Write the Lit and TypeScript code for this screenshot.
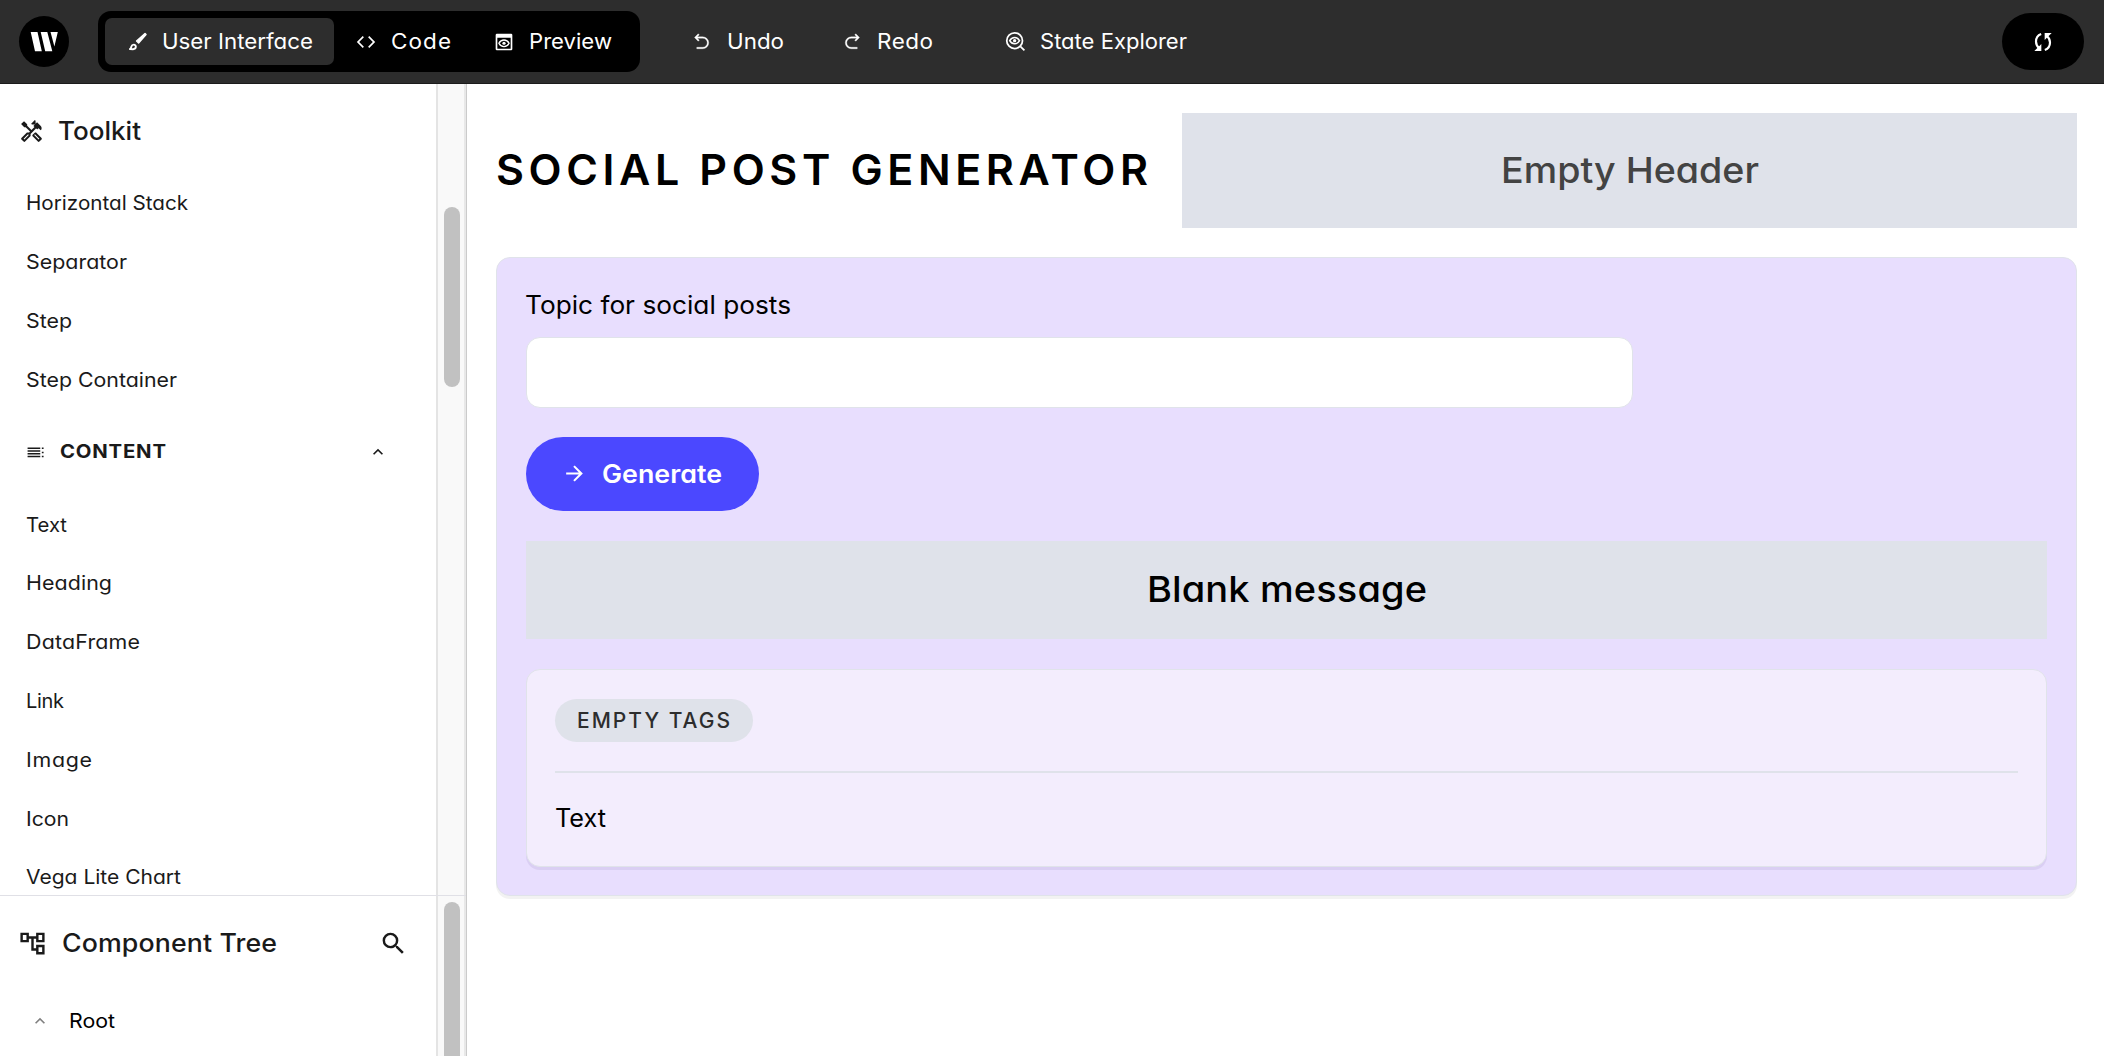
import { LitElement, html, css, svg } from "lit";
import { customElement, property, state } from "lit/decorators.js";

/* Icon shapes, all on a 24 x 24 grid. */
const ICONS: Record<string, unknown> = {
  brush: svg`<path d="M21.500 1.800 22.800 3.100 13.400 14 10.800 11.400Z" stroke="currentColor" stroke-width="1.800" stroke-linejoin="round"/><path d="M2.400 21.600c1.400-.7 1.500-1.800 1.900-3.200.4-1.500 1.500-2.400 3-2.400 1.600 0 2.700 1.200 2.600 2.700-.1 1.900-1.500 3-3.500 3-1.400 0-2.800 0-4-.1Z" fill="none" stroke="currentColor" stroke-width="2.400" stroke-linejoin="round"/>`,
  code: svg`<path d="M23 12 15.929 19.071 14.515 17.657 20.172 12 14.515 6.343 15.929 4.929 23 12ZM3.828 12 9.485 17.657 8.071 19.071 1 12 8.071 4.929 9.485 6.343 3.828 12Z"/>`,
  preview: svg`<path fill-rule="evenodd" d="M3.500 2h17A1.500 1.500 0 0 1 22 3.500v17a1.500 1.500 0 0 1-1.500 1.500h-17A1.500 1.500 0 0 1 2 20.500v-17A1.500 1.500 0 0 1 3.500 2ZM4 7v13h16V7Z"/><path fill="none" stroke="currentColor" stroke-width="1.700" d="M5.900 13.500C7.200 10.900 9.300 9.500 12 9.500s4.800 1.400 6.100 4c-1.300 2.600-3.400 4-6.100 4s-4.800-1.400-6.100-4Z"/><circle cx="12" cy="13.500" r="1.900"/>`,
  undo: svg`<path stroke="currentColor" stroke-width=".4" d="M5.828 7 8.364 9.535 6.950 10.949 2 6 6.950 1.050 8.364 2.464 5.828 5H13a8 8 0 1 1 0 16H5v-2h8a6 6 0 0 0 0-12H5.828Z"/>`,
  redo: svg`<path stroke="currentColor" stroke-width=".4" d="M18.172 7H11a6 6 0 0 0 0 12h8v2h-8a8 8 0 1 1 0-16h7.172l-2.536-2.536L17.050 1.050 22 6l-4.950 4.949-1.414-1.414L18.172 7Z"/>`,
  explorer: svg`<g fill="none" stroke="currentColor" stroke-width="2"><circle cx="11" cy="11" r="9"/><path d="m17.500 17.500 4.700 4.700"/><path stroke-width="1.800" d="M5.400 11c1.300-2.400 3.100-3.600 5.600-3.600s4.300 1.200 5.600 3.600c-1.300 2.400-3.100 3.600-5.600 3.600S6.700 13.400 5.400 11Z"/></g><circle cx="11" cy="11" r="1.900"/>`,
  refresh: svg`<g fill="none" stroke="currentColor" stroke-width="2.600"><path d="M9.800 2.300C6.300 3.600 3.600 7 3.600 11.400c0 3.500 1.500 6.200 4.200 8.300"/><path d="M14.200 21.700c3.500-1.300 6.200-4.700 6.200-9.100 0-3.500-1.500-6.200-4.200-8.300"/></g><path d="M1.600 22.800H10v-8.400l-2.600 2.700-3.700 3.600ZM22.400 1.200H14v8.400l2.600-2.700 3.700-3.600Z"/>`,
  toolkit: svg`<path fill-rule="evenodd" d="M21.670 18.170l-5.300-5.300h-.99l-2.540 2.540v.99l5.300 5.300c.39.39 1.020.39 1.410 0l2.120-2.120c.39-.38.39-1.020 0-1.410ZM18.840 19.590l-4.240-4.240.71-.71 4.240 4.240-.71.71Z"/><path fill-rule="evenodd" d="M17.340 10.190l1.410-1.410 2.120 2.120c1.170-1.170 1.170-3.070 0-4.240l-3.540-3.540-1.410 1.410V1.710L15.220 1l-3.540 3.540.71.71h2.830l-1.410 1.410 1.060 1.060-2.890 2.890L7.850 6.480V5.060L4.830 2.040 2 4.870 5.030 7.900h1.410l4.130 4.130-.85.85H7.600l-5.300 5.300c-.39.39-.39 1.020 0 1.410l2.120 2.120c.39.39 1.020.39 1.410 0l5.300-5.300v-2.120l5.150-5.150 1.060.35ZM9.380 15.340l-4.240 4.240-.71-.71 4.240-4.240.71.71Z"/>`,
  content: svg`<path d="M2 5.800h16v1.900H2zM2 9.200h16v1.900H2zM2 12.600h16v1.900H2zM2 16h16v1.900H2zM20 5.800h2.200v1.900H20zM20 10.900h2.200v1.900H20zM20 16h2.200v1.900H20z"/>`,
  up: svg`<path d="M12 10.830 7.400 15.400 6 14l6-6 6 6-1.400 1.400Z"/>`,
  tree: svg`<path fill-rule="evenodd" d="M22 11V3h-7v3H9V3H2v8h7V8h2v10h4v3h7v-8h-7v3h-2V8h2v3ZM7 9H4V5h3ZM17 15h3v4h-3ZM17 5h3v4h-3Z"/>`,
  search: svg`<path fill-rule="evenodd" d="M15.500 14h-.79l-.28-.27A6.470 6.470 0 0 0 16 9.500 6.500 6.500 0 1 0 9.500 16c1.610 0 3.090-.59 4.230-1.570l.27.28v.79l5 4.990L20.490 19l-4.990-5Zm-6 0a4.500 4.500 0 1 1 0-9 4.500 4.500 0 0 1 0 9Z"/>`,
  arrow: svg`<path d="m16.172 11-5.364-5.364 1.414-1.414L20 12l-7.778 7.778-1.414-1.414L16.172 13H4v-2z"/>`,
};

@customElement("ui-icon")
class UiIcon extends LitElement {
  static styles = css`
    :host { display: inline-flex; flex: none; }
    svg { display: block; fill: currentColor; overflow: visible; }
  `;
  @property() name = "";
  @property({ type: Number }) size = 20;
  render() {
    return html`<svg width=${this.size} height=${this.size} viewBox="0 0 24 24" aria-hidden="true">${ICONS[this.name]}</svg>`;
  }
}

/* A single-line label fitted to a given width: letters widen slightly first, tracking takes the rest. */
@customElement("ui-label")
class UiLabel extends LitElement {
  static styles = css`
    :host { display: inline-block; flex: none; white-space: nowrap; }
    .box { display: block; }
    .text { display: inline-block; white-space: nowrap; transform-origin: 0 50%; }
  `;
  @property() text = "";
  @property({ type: Number }) width = 0;
  @property({ type: Number }) stretch = 1.07;
  @state() private tracking = 0;
  @state() private scale = 1;
  firstUpdated() {
    const span = this.renderRoot.querySelector(".text") as HTMLElement;
    const natural = span.getBoundingClientRect().width;
    this.scale = Math.max(1, Math.min(this.stretch, this.width / natural));
    this.tracking = (this.width / this.scale - natural) / Math.max(1, this.text.length - 1);
  }
  render() {
    return html`<span class="box" style="width:${this.width}px"><span class="text" style="letter-spacing:${this.tracking}px;transform:scaleX(${this.scale})">${this.text}</span></span>`;
  }
}

interface Item { label: string; width: number; }

const LAYOUT_ITEMS: Item[] = [
  { label: "Horizontal Stack", width: 162 },
  { label: "Separator", width: 101 },
  { label: "Step", width: 46 },
  { label: "Step Container", width: 151 },
];
const CONTENT_ITEMS: Item[] = [
  { label: "Text", width: 41 },
  { label: "Heading", width: 86 },
  { label: "DataFrame", width: 114 },
  { label: "Link", width: 38 },
  { label: "Image", width: 66 },
  { label: "Icon", width: 43 },
  { label: "Vega Lite Chart", width: 155 },
];

@customElement("app-header")
class AppHeader extends LitElement {
  static styles = css`
    :host { display: block; }
    .bar { box-sizing: border-box; height: 84px; display: flex; align-items: center; padding: 0 20px 0 19px; background: #2d2d2d; border-bottom: 1px solid #1b1b1b; color: #fff; font-size: 21px; line-height: 30px; }
    .logo { width: 50px; height: 51px; border-radius: 50%; background: #000; display: flex; align-items: center; justify-content: center; }
    .logo svg { display: block; fill: #fff; }
    .switch { display: flex; align-items: center; box-sizing: border-box; height: 61px; margin-left: 29px; padding: 0 7px; background: #000; border-radius: 13px; }
    .action { display: flex; align-items: center; gap: 13px; }
    .tab { padding: 0 21px 0 20px; height: 47px; border-radius: 7px; }
    .active { background: #2d2d2d; }
    .slot { width: 24px; display: flex; justify-content: center; }
    .undo { margin-left: 50px; }
    .redo { margin-left: 56px; }
    .state { margin-left: 70px; }
    .refresh { margin-left: auto; width: 82px; height: 57px; border-radius: 29px; background: #000; display: flex; align-items: center; justify-content: center; }
  `;
  private action(cls: string, icon: string, size: number, text: string, width: number) {
    return html`<div class="action ${cls}"><span class="slot"><ui-icon name=${icon} .size=${size}></ui-icon></span><ui-label .text=${text} .width=${width}></ui-label></div>`;
  }
  render() {
    return html`<div class="bar">
      <div class="logo">
        <svg width="28" height="21" viewBox="0 0 28 21"><path d="M.7 1h6.800l4.300 19.300H5ZM10.700 1h6.600l5 19.300h-7.100ZM20.500 1h7.300l-3.400 14.600Z"/></svg>
      </div>
      <div class="switch">
        ${this.action("tab active", "brush", 19, "User Interface", 151)}
        ${this.action("tab", "code", 20, "Code", 60)}
        ${this.action("tab", "preview", 20, "Preview", 83)}
      </div>
      ${this.action("undo", "undo", 18, "Undo", 57)}
      ${this.action("redo", "redo", 18, "Redo", 56)}
      ${this.action("state", "explorer", 21, "State Explorer", 147)}
      <div class="refresh"><ui-icon name="refresh" .size=${20}></ui-icon></div>
    </div>`;
  }
}

@customElement("app-sidebar")
class AppSidebar extends LitElement {
  static styles = css`
    :host { display: flex; flex-direction: column; box-sizing: border-box; width: 467px; height: 972px; border-right: 1px solid #cbcbcb; color: #1a1a1a; }
    .panel { display: flex; overflow: hidden; flex: none; }
    .toolkit { height: 811px; }
    .tree { height: 160px; border-top: 1px solid #e0e0e6; }
    .body { flex: 1; min-width: 0; }
    .track { box-sizing: border-box; width: 30px; flex: none; background: #f9f9f9; border-left: 2px solid #e4e4e4; border-right: 2px solid #e8e8e8; padding-left: 6px; }
    .thumb { width: 16px; border-radius: 8px; background: #c1c1c1; }
    .thumb-toolkit { height: 180px; margin-top: 123px; }
    .thumb-tree { height: 200px; margin-top: 6px; }
    .title { display: flex; align-items: center; box-sizing: border-box; font-size: 25px; font-weight: 500; line-height: 36px; }
    .toolkit-title { height: 90px; padding: 4px 0 0 19px; gap: 14px; }
    .tree-title { height: 94px; padding: 0 28px 0 18px; gap: 15px; }
    .item { height: 58.800px; padding-left: 26px; display: flex; align-items: center; font-size: 20px; line-height: 28px; }
    .section { height: 86px; padding: 0 48px 0 26px; display: flex; align-items: center; gap: 15px; font-size: 19px; font-weight: 700; line-height: 28px; }
    .push { margin-left: auto; }
    .root { height: 61px; padding-left: 30px; display: flex; align-items: center; gap: 19px; font-size: 20px; line-height: 28px; color: #000; }
    .muted { color: #808080; }
  `;
  private item(i: Item) {
    return html`<div class="item"><ui-label .text=${i.label} .width=${i.width}></ui-label></div>`;
  }
  render() {
    return html`
      <div class="panel toolkit">
        <div class="body">
          <div class="title toolkit-title"><ui-icon name="toolkit" .size=${25}></ui-icon><ui-label .text=${"Toolkit"} .width=${83}></ui-label></div>
          ${LAYOUT_ITEMS.map((i) => this.item(i))}
          <div class="section"><ui-icon name="content" .size=${19}></ui-icon><ui-label .text=${"CONTENT"} .width=${106}></ui-label><ui-icon class="push" name="up" .size=${20}></ui-icon></div>
          ${CONTENT_ITEMS.map((i) => this.item(i))}
        </div>
        <div class="track"><div class="thumb thumb-toolkit"></div></div>
      </div>
      <div class="panel tree">
        <div class="body">
          <div class="title tree-title"><ui-icon name="tree" .size=${29}></ui-icon><ui-label .text=${"Component Tree"} .width=${215}></ui-label><ui-icon class="push" name="search" .size=${29}></ui-icon></div>
          <div class="root"><ui-icon class="muted" name="up" .size=${20}></ui-icon><ui-label .text=${"Root"} .width=${46}></ui-label></div>
        </div>
        <div class="track"><div class="thumb thumb-tree"></div></div>
      </div>`;
  }
}

@customElement("app-canvas")
class AppCanvas extends LitElement {
  static styles = css`
    :host { display: flex; flex-direction: column; flex: 1; min-width: 0; box-sizing: border-box; padding: 29px 27px 0 29px; color: #000; }
    .head { display: flex; align-items: center; height: 115px; }
    .title { box-sizing: border-box; font-size: 43px; font-weight: 600; line-height: 60px; width: 686px; padding-bottom: 3px; }
    .slot { flex: 1; height: 115px; display: flex; align-items: center; justify-content: center; background: #dfe2ea; color: #434343; font-size: 35.500px; font-weight: 500; line-height: 50px; }
    .card { box-sizing: border-box; height: 639px; margin-top: 29px; padding: 28px 29px; display: flex; flex-direction: column; align-items: stretch; background: #e8defe; border: 1px solid #e0e3ea; border-radius: 14px; box-shadow: 0 3px 0 rgba(0, 0, 0, 0.05); }
    .field { font-size: 25px; line-height: 38px; margin-left: -1px; }
    .input { box-sizing: border-box; width: 1107px; height: 71px; margin-top: 13px; border: 1px solid #e0e3ea; border-radius: 14px; background: #fff; }
    .button { align-self: flex-start; box-sizing: border-box; width: 233px; height: 74px; margin-top: 29px; border-radius: 37px; background: #4b48ff; color: #fff; display: flex; align-items: center; padding-left: 36px; gap: 15px; font-size: 25px; font-weight: 600; line-height: 36px; }
    .message { height: 99px; margin-top: 30px; background: #dfe2ea; display: flex; align-items: center; justify-content: center; font-size: 35.500px; font-weight: 500; line-height: 50px; }
    .result { box-sizing: border-box; height: 198px; margin-top: 30px; padding: 29px 28px 0; background: #f3edfd; border: 1px solid #e0e3ea; border-radius: 14px; box-shadow: 0 3px 0 rgba(60, 40, 120, 0.08); display: flex; flex-direction: column; align-items: flex-start; }
    .tag { box-sizing: border-box; width: 198px; height: 43px; padding-left: 22px; border-radius: 22px; background: #dfe2ea; color: #2d2d2d; display: flex; align-items: center; font-size: 21px; font-weight: 500; line-height: 30px; }
    .rule { align-self: stretch; height: 2px; margin: 29px 0 27px; background: #dfe2ea; }
    .text { font-size: 25px; line-height: 36px; }
  `;
  render() {
    return html`
      <div class="head">
        <div class="title"><ui-label .text=${"SOCIAL POST GENERATOR"} .width=${652} .stretch=${1}></ui-label></div>
        <div class="slot"><ui-label .text=${"Empty Header"} .width=${258}></ui-label></div>
      </div>
      <div class="card">
        <div class="field"><ui-label .text=${"Topic for social posts"} .width=${266}></ui-label></div>
        <div class="input"></div>
        <div class="button"><ui-icon name="arrow" .size=${25}></ui-icon><ui-label .text=${"Generate"} .width=${120}></ui-label></div>
        <div class="message"><ui-label .text=${"Blank message"} .width=${280}></ui-label></div>
        <div class="result">
          <div class="tag"><ui-label .text=${"EMPTY TAGS"} .width=${153} .stretch=${1}></ui-label></div>
          <div class="rule"></div>
          <div class="text"><ui-label .text=${"Text"} .width=${51}></ui-label></div>
        </div>
      </div>`;
  }
}

@customElement("app-root")
class AppRoot extends LitElement {
  static styles = css`
    :host { display: block; width: 2104px; height: 1056px; overflow: hidden; background: #fff; font-family: Inter, "Open Sans", "Liberation Sans", sans-serif; font-feature-settings: "cv11" 1; -webkit-font-smoothing: antialiased; }
    .main { display: flex; height: 972px; }
  `;
  render() {
    return html`<app-header></app-header><div class="main"><app-sidebar></app-sidebar><app-canvas></app-canvas></div>`;
  }
}
